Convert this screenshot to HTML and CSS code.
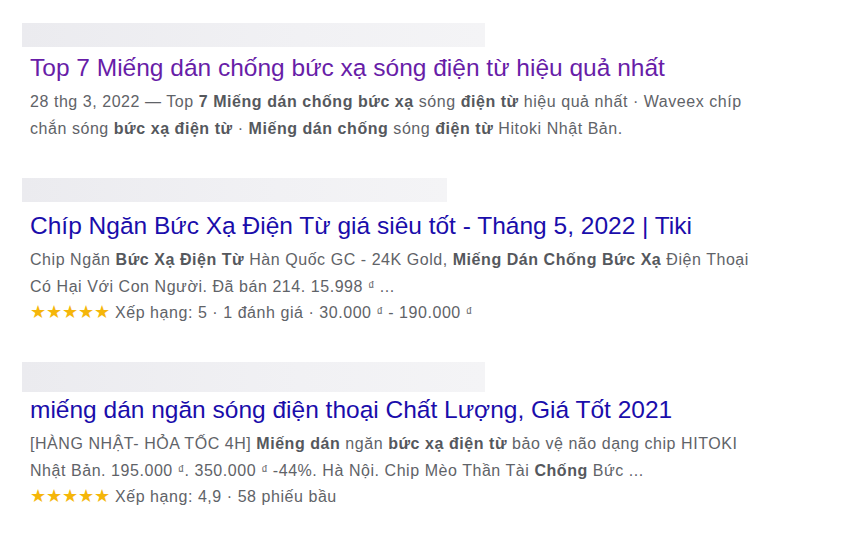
FILE: index.html
```html
<!DOCTYPE html>
<html lang="vi">
<head>
<meta charset="utf-8">
<title>Kết quả tìm kiếm</title>
<link rel="stylesheet" href="styles.css">
</head>
<body>
<main class="results">
  <article class="result">
    <div class="url-bar url-bar--first"></div>
    <h3 class="title title--visited">Top 7 Miếng dán chống bức xạ sóng điện từ hiệu quả nhất</h3>
    <div class="snippet">
      <p class="line">28 thg 3, 2022 — Top <b>7 Miếng dán chống bức xạ</b> sóng <b>điện từ</b> hiệu quả nhất · Waveex chíp</p>
      <p class="line">chắn sóng <b>bức xạ điện từ</b> · <b>Miếng dán chống</b> sóng <b>điện từ</b> Hitoki Nhật Bản.</p>
    </div>
  </article>

  <article class="result">
    <div class="url-bar url-bar--short"></div>
    <h3 class="title">Chíp Ngăn Bức Xạ Điện Từ giá siêu tốt - Tháng 5, 2022 | Tiki</h3>
    <div class="snippet">
      <p class="line">Chip Ngăn <b>Bức Xạ Điện Từ</b> Hàn Quốc GC - 24K Gold, <b>Miếng Dán Chống Bức Xạ</b> Điện Thoại</p>
      <p class="line">Có Hại Với Con Người. Đã bán 214. 15.998 <span class="cur">₫</span> ...</p>
      <p class="line rating"><span class="stars">★★★★★</span> Xếp hạng: 5 · 1 đánh giá · 30.000 <span class="cur">₫</span> - 190.000 <span class="cur">₫</span></p>
    </div>
  </article>

  <article class="result">
    <div class="url-bar url-bar--tall"></div>
    <h3 class="title title--tight">miếng dán ngăn sóng điện thoại Chất Lượng, Giá Tốt 2021</h3>
    <div class="snippet">
      <p class="line">[HÀNG NHẬT- HỎA TỐC 4H] <b>Miếng dán</b> ngăn <b>bức xạ điện từ</b> bảo vệ não dạng chip HITOKI</p>
      <p class="line">Nhật Bản. 195.000 <span class="cur">₫</span>. 350.000 <span class="cur">₫</span> -44%. Hà Nội. Chip Mèo Thần Tài <b>Chống</b> Bức ...</p>
      <p class="line rating"><span class="stars">★★★★★</span> Xếp hạng: 4,9 · 58 phiếu bầu</p>
    </div>
  </article>
</main>
</body>
</html>
```
FILE: styles.css
```css
html, body {
  margin: 0;
  padding: 0;
  background: #ffffff;
}

body {
  font-family: "Liberation Sans", Arial, sans-serif;
  color: #5f6368;
}

.results {
  display: flex;
  flex-direction: column;
  gap: 36px;
  padding: 23px 0 0 22px;
}

.result {
  display: flex;
  flex-direction: column;
}

/* blurred-out site/url line above each title */
.url-bar {
  width: 463px;
  height: 24px;
  background: linear-gradient(90deg, #ebebef 0%, #f1f1f4 60%, #f4f4f6 100%);
}

.url-bar--short {
  width: 425px;
}

.url-bar--tall {
  height: 30px;
}

.title {
  margin: 8px 0 0 8px;
  font-weight: normal;
  font-size: 24.5px;
  line-height: 32px;
  color: #1a0dab;
  white-space: nowrap;
}

.title--visited {
  margin-top: 5px;
  color: #681da8;
}

.title--tight {
  margin-top: 2px;
}

.snippet {
  margin: 4px 0 0 8px;
  font-size: 16px;
  letter-spacing: 0.55px;
  line-height: 27px;
  color: #5f6368;
}

.line {
  margin: 0;
  white-space: nowrap;
}

.line b {
  color: #55585d;
}

.rating {
  line-height: 26px;
}

/* the dong sign sits small and raised after a price */
.cur {
  font-size: 13px;
  line-height: 0;
  vertical-align: 2px;
  letter-spacing: 0;
}

.stars {
  color: #f5b60a;
  letter-spacing: 0;
  font-size: 17.5px;
  line-height: 0;
}
```
